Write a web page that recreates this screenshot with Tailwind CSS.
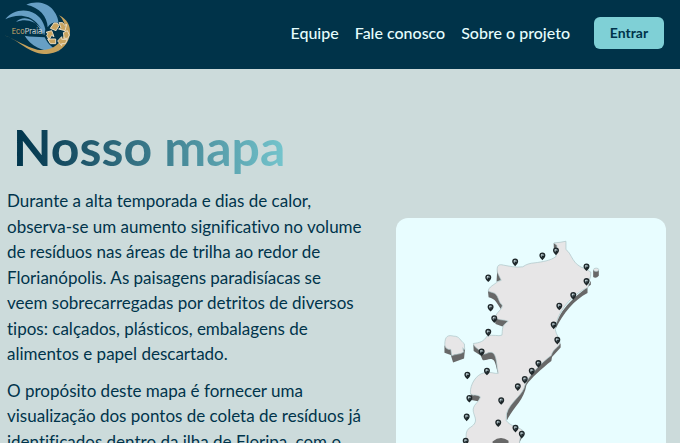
<!DOCTYPE html>
<html lang="pt-BR">
<head>
<meta charset="utf-8">
<meta name="viewport" content="width=device-width, initial-scale=1">
<title>EcoPraia - Nosso mapa</title>
<script src="https://cdn.jsdelivr.net/npm/@tailwindcss/browser@4"></script>
</head>
<body class="h-screen overflow-hidden bg-[#ccdbdb] font-['Lato',sans-serif] text-[#00344b] [font-variant-ligatures:none]">
<header class="flex h-[69px] items-start justify-between bg-[#003349] pr-4">
  <a href="#" aria-label="EcoPraia">
    <svg class="h-[60px] w-[75px]" viewBox="0 0 225 180">
      <path fill="#679fc5" d="M79 14C101 3 136 5 155 25C169 41 175 56 175 68C160 65 150 70 143 82C142 50 119 22 79 14Z"/>
      <path fill="#679fc5" d="M16 58C32 36 62 27 88 34C116 43 130 62 136 88L133 106C124 84 110 62 86 52C62 43 38 47 16 58Z"/>
      <path fill="#679fc5" d="M48 66C62 52 82 52 98 63C112 73 122 89 130 106L128 86L122 84C104 62 76 54 48 66Z"/>
      <path fill="#679fc5" d="M74 107C92 111 112 110 134 112C144 134 160 147 180 153C142 160 94 142 74 107Z"/>
      <path fill="#c7a25c" d="M13 106C48 119 75 140 112 149C154 155 185 131 194 98C198 78 191 59 177 46C202 58 212 78 210 101C205 139 173 162 132 162C88 161 58 122 13 106Z"/>
      <g fill="#c9a45f" stroke="#e8dcc2" stroke-width="3" stroke-linejoin="round">
        <path d="M151 85L162 69H172L177 77L168 92Z"/>
        <path d="M177 68H188L194 76L200 73L195 92L176 87L183 83Z"/>
        <path d="M190 98L202 92L208 105L203 115H193Z"/>
        <path d="M202 118L196 131H185V137L173 123L185 110V118Z"/>
        <path d="M167 117V131H151L143 117Z"/>
        <path d="M138 97L155 92L162 110L155 106L147 119L140 106L144 101Z"/>
      </g>
      <text x="35" y="102" font-family="Inter, sans-serif" font-size="22" fill="#d4dcda"><tspan fill="#d3ad67">Eco</tspan>Praia</text>
    </svg>
  </a>
  <nav class="flex items-center gap-4 pt-[17px] text-base font-medium text-[#e6fdfd]">
    <a href="#">Equipe</a>
    <a href="#">Fale conosco</a>
    <a href="#">Sobre o projeto</a>
    <button type="button" class="ml-2 h-8 w-[70px] rounded-md bg-[#7fd0d6] text-sm font-bold text-[#00344b]">Entrar</button>
  </nav>
</header>
<main class="grid grid-cols-[minmax(0,1fr)_41%] gap-x-4 pr-3.5 pl-[7px]">
  <section class="pt-12">
    <h1 class="ml-1.5 w-fit bg-linear-to-r from-[#00344b] to-[#75c5cd] bg-clip-text text-[50px] leading-[60px] font-bold whitespace-nowrap text-transparent">Nosso mapa</h1>
    <div class="mt-[11px] space-y-[11px] text-[17px] leading-normal whitespace-nowrap">
      <p>Durante a alta temporada e dias de calor,<br>observa-se um aumento significativo no volume<br>de resíduos nas áreas de trilha ao redor de<br>Florianópolis. As paisagens paradisíacas se<br>veem sobrecarregadas por detritos de diversos<br>tipos: calçados, plásticos, embalagens de<br>alimentos e papel descartado.</p>
      <p>O propósito deste mapa é fornecer uma<br>visualização dos pontos de coleta de resíduos já<br>identificados dentro da ilha de Floripa, com o</p>
    </div>
  </section>
  <figure class="mt-[149px] self-start overflow-hidden rounded-xl bg-[#e8fdff]">
    <svg class="block w-full" viewBox="15 24 814 720" role="img" aria-label="Mapa da ilha de Florianópolis">
      <defs>
        <g id="pin">
          <path fill="#1d2629" d="M0 12C-4 7-9 4-9-2A9 9 0 0 1 9-2C9 4 4 7 0 12Z"/>
          <circle cy="-2" r="5" fill="#819197"/>
          <path fill="#182124" d="M-1-1H5V3H-1Z"/>
          <circle cx="-2" cy="-4" r="2" fill="#d8e5e7"/>
        </g>
      </defs>
      <g fill="#686868">
        <path d="M490 99L502 106V137L491 126Z"/>
        <path d="M320 178L332 211L318 216Z"/>
        <path d="M292 244L320 240L337 283L331 298C319 282 315 267 294 263Z"/>
        <path d="M311 326L354 333L336 351L315 343Z"/>
        <path d="M248 405L274 427L301 428C318 430 321 454 323 493C316 475 316 455 306 450C294 445 286 455 276 452L270 438L249 425Z"/>
        <path d="M161 408L183 418V435L223 418L220 447L187 459L180 437L161 430Z"/>
        <path d="M240 551L271 562L262 576L242 572Z"/>
        <path d="M602 190V213L592 233V250C553 270 519 310 496 358C499 310 550 261 602 225Z"/>
        <path d="M496 375L511 404V414L485 443L483 455C455 477 422 507 408 527C400 575 369 592 349 634C343 591 377 572 391 548C399 511 437 477 475 443Z"/>
        <path d="M386 665L402 672L388 698L380 720Z"/>
        <path d="M609 181H626V198Q618 208 609 202Z"/>
      </g>
      <g fill="#e7e6e7" stroke="#a9c3c6" stroke-width="2" stroke-linejoin="round">
        <path d="M491 99Q510 98 527 94V119C546 132 545 166 586 177L602 187C603 207 593 214 594 233C548 252 497 307 495 361C498 379 510 386 509 401C506 414 488 417 483 438C455 458 415 498 404 527C398 558 359 578 348 613L347 634C358 651 383 653 397 664C388 676 391 690 383 720H229C232 693 218 676 234 658C267 639 251 626 248 607C244 587 265 580 269 563C258 553 243 563 239 551C238 525 257 494 282 490C300 486 312 494 323 492C318 472 319 433 304 429C290 427 288 436 276 434C271 421 249 415 248 402C268 400 279 396 289 380C307 373 324 382 334 377C337 361 331 349 353 335C338 329 325 334 315 323C317 306 337 300 335 286C323 280 324 252 307 249L293 245C292 232 313 224 322 215L332 212L320 187C318 167 324 162 339 166C357 169 375 174 397 171C407 164 417 160 434 159C455 156 480 153 497 140L500 107Z"/>
        <path d="M162 405C162 378 173 376 189 380C207 380 207 392 221 403L222 421L216 415L219 428C207 436 196 433 183 439L180 420C170 421 162 415 162 405Z"/>
        <ellipse cx="618" cy="180" rx="8" ry="5"/>
      </g>
      <path fill="#686868" d="M306 697Q330 678 354 695V720H306Z"/>
      <use href="#pin" x="497" y="124"/><use href="#pin" x="456" y="139"/><use href="#pin" x="374" y="157"/>
      <use href="#pin" x="293" y="205"/><use href="#pin" x="589" y="172"/><use href="#pin" x="589" y="216"/>
      <use href="#pin" x="549" y="258"/><use href="#pin" x="507" y="290"/><use href="#pin" x="300" y="294"/>
      <use href="#pin" x="311" y="328"/><use href="#pin" x="293" y="369"/><use href="#pin" x="490" y="347"/>
      <use href="#pin" x="501" y="393"/><use href="#pin" x="273" y="428"/><use href="#pin" x="444" y="463"/>
      <use href="#pin" x="424" y="486"/><use href="#pin" x="289" y="486"/><use href="#pin" x="230" y="498"/>
      <use href="#pin" x="403" y="511"/><use href="#pin" x="382" y="533"/><use href="#pin" x="236" y="568"/>
      <use href="#pin" x="332" y="575"/><use href="#pin" x="228" y="624"/><use href="#pin" x="323" y="642"/>
      <use href="#pin" x="375" y="658"/><use href="#pin" x="394" y="676"/><use href="#pin" x="225" y="697"/>
    </svg>
  </figure>
</main>
</body>
</html>
